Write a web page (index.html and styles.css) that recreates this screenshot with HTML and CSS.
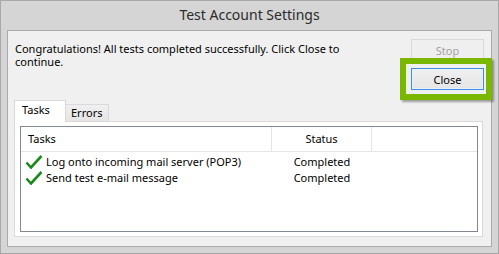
FILE: index.html
```html
<!DOCTYPE html>
<html>
<head>
    <title>Test Account Settings</title>
    <link rel="stylesheet" href="styles.css">
</head>
<body>
    <div class="window">
        <div class="titlebar">Test Account Settings</div>
        <div class="client">
            <div class="top-row">
                <p class="message">Congratulations! All tests completed successfully. Click Close to continue.</p>
                <div class="buttons">
                    <button class="btn" disabled>Stop</button>
                    <div class="highlight-wrap">
                        <button class="btn btn-default">Close</button>
                        <span class="highlight"></span>
                    </div>
                </div>
            </div>

            <div class="tabs">
                <div class="tab active">Tasks</div>
                <div class="tab">Errors</div>
            </div>
            <div class="tab-panel">
                <div class="list">
                    <div class="list-head">
                        <div class="col-task">Tasks</div>
                        <div class="col-status">Status</div>
                        <div class="col-rest"></div>
                    </div>
                    <div class="list-row">
                        <div class="col-task">
                            <svg class="check" viewBox="0 0 18 14" width="18" height="14"><path d="M1.5 7.5 L6 12.5 L16.5 1" fill="none" stroke="#1d8a1d" stroke-width="2.6" stroke-linejoin="miter"/></svg>
                            Log onto incoming mail server (POP3)
                        </div>
                        <div class="col-status">Completed</div>
                    </div>
                    <div class="list-row">
                        <div class="col-task">
                            <svg class="check" viewBox="0 0 18 14" width="18" height="14"><path d="M1.5 7.5 L6 12.5 L16.5 1" fill="none" stroke="#1d8a1d" stroke-width="2.6" stroke-linejoin="miter"/></svg>
                            Send test e-mail message
                        </div>
                        <div class="col-status">Completed</div>
                    </div>
                </div>
            </div>
        </div>
    </div>
</body>
</html>
```

FILE: styles.css
```css
* {
    box-sizing: border-box;
}
body {
    margin: 0;
    font-family: "Noto Sans", Arial, sans-serif;
    font-size: 11px;
    color: #000;
}
.window {
    width: 499px;
    height: 254px;
    background-color: #d5d5d5;
    border: 1px solid #a8a8a8;
    padding: 0 6px 6px 6px;
}
.titlebar {
    height: 29px;
    line-height: 28px;
    text-align: center;
    font-size: 14px;
    color: #2b2b2b;
}
.client {
    height: 217px;
    background-color: #f0f0f0;
    border: 1px solid #ababab;
    padding: 0 8px 0 6px;
}
.top-row {
    display: flex;
    justify-content: space-between;
    height: 69px;
}
.message {
    margin: 11px 0 0 1px;
    width: 345px;
    line-height: 13px;
}
.buttons {
    display: flex;
    flex-direction: column;
    gap: 7px;
    padding-top: 8px;
    margin-right: -1px;
}
.btn {
    width: 73px;
    height: 22px;
    font-family: inherit;
    font-size: 11px;
    padding: 0;
    border: 1px solid #adadad;
    background: linear-gradient(#f0f0f0, #e5e5e5);
    color: #000;
}
.btn[disabled] {
    border-color: #d9d9d9;
    background: #efefef;
    color: #a3a3a3;
}
.btn-default {
    border-color: #3c8fe0;
    box-shadow: inset 0 0 0 1px #e8f1fb;
}
.highlight-wrap {
    position: relative;
}
.highlight {
    position: absolute;
    left: -11px;
    top: -10px;
    width: 92px;
    height: 42px;
    border: 6px solid #7ab800;
    box-shadow: 2px 2px 2px rgba(0,0,0,0.35);
}
.tabs {
    display: flex;
    align-items: flex-end;
    height: 21px;
}
.tab {
    border: 1px solid #d9d9d9;
    border-bottom: none;
    background: linear-gradient(#f0f0f0, #e5e5e5);
    height: 17px;
    line-height: 16px;
    padding: 0 5px;
    width: 44px;
    margin-left: -1px;
}
.tab.active {
    width: 52px;
    height: 22px;
    background: #fff;
    margin-left: 0;
    margin-bottom: -1px;
    line-height: 18px;
    padding-left: 7px;
    position: relative;
    z-index: 1;
}
.tab-panel {
    height: 116px;
    border: 1px solid #d9d9d9;
    background: #fff;
    padding: 4px 4px 4px 5px;
}
.list {
    height: 106px;
    border: 1px solid #828790;
    background: #fff;
}
.list-head {
    display: flex;
    height: 25px;
    line-height: 24px;
    border-bottom: 1px solid #e5e5e5;
}
.list-head .col-task,
.list-head .col-status {
    border-right: 1px solid #e5e5e5;
}
.col-task {
    width: 251px;
    padding-left: 7px;
    display: flex;
    align-items: center;
}
.col-status {
    width: 100px;
    text-align: center;
}
.list-row {
    display: flex;
    height: 16px;
    line-height: 16px;
}
.list-head + .list-row {
    margin-top: 2px;
}
.list-row .col-task {
    padding-left: 4px;
}
.check {
    margin-right: 3px;
    flex: none;
}
```
